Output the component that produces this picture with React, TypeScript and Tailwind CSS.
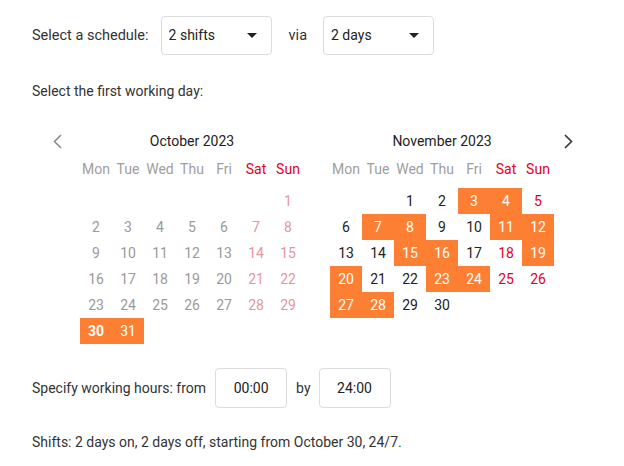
import clsx from "clsx";

const DAYS = ["Mon", "Tue", "Wed", "Thu", "Fri", "Sat", "Sun"];

// offset = empty cells before day 1 (Mon-first)
const OCT = { title: "October 2023", offset: 6, count: 31 };
const NOV = { title: "November 2023", offset: 2, count: 30 };

// shift pattern: 2 on, 2 off, starting Oct 30
function isOn(month: "oct" | "nov", day: number) {
  if (month === "oct") return day >= 30;
  const idx = day + 1; // Oct 30 = 0, Oct 31 = 1, Nov 1 = 2
  return idx % 4 < 2;
}

function Caret() {
  return (
    <svg width="10" height="5" viewBox="0 0 10 5" className="shrink-0">
      <path d="M0 0h10L5 5z" fill="#222" />
    </svg>
  );
}

function Select({ value }: { value: string }) {
  return (
    <div className="flex h-[39px] w-[111px] items-center justify-between rounded border border-[#dcdcdc] pl-[7px] pr-[14px] text-[14px] text-[#222]">
      <span>{value}</span>
      <Caret />
    </div>
  );
}

function Month({ title, offset, count, past, month }: { title: string; offset: number; count: number; past: boolean; month: "oct" | "nov" }) {
  const cells: (number | null)[] = [];
  for (let i = 0; i < offset; i++) cells.push(null);
  for (let d = 1; d <= count; d++) cells.push(d);

  return (
    <div className="w-[224px]">
      <div className="flex h-[24px] items-center justify-center text-[14px] text-[#222]">{title}</div>
      <div className="mt-[4px] grid h-[24px] grid-cols-7 items-center text-center text-[14px]">
        {DAYS.map((d, i) => (
          <span key={d} className={i >= 5 ? "text-[#e3001b]" : "text-[#9e9e9e]"}>{d}</span>
        ))}
      </div>
      <div className="mt-[7px] grid grid-cols-7 text-center text-[14px]">
        {cells.map((d, i) => {
          if (d === null) return <span key={i} className="h-[26px]" />;
          const weekend = i % 7 >= 5;
          const on = isOn(month, d);
          return (
            <span
              key={i}
              className={clsx(
                "flex h-[26px] items-center justify-center",
                on && "bg-[#fd7f34] text-white",
                on && month === "oct" && d === 30 && "font-bold",
                !on && past && (weekend ? "text-[#e8959e]" : "text-[#9a9a9a]"),
                !on && !past && (weekend ? "text-[#e3001b]" : "text-[#222]")
              )}
            >
              {d}
            </span>
          );
        })}
      </div>
    </div>
  );
}

function TimeBox({ value }: { value: string }) {
  return (
    <div className="flex h-[40px] w-[72px] items-center justify-center rounded border border-[#dcdcdc] text-[14px] text-[#222]">
      {value}
    </div>
  );
}

export default function App() {
  return (
    <div className="h-[466px] w-[624px] bg-white pl-[32px] pt-[16px] text-[14px] text-[#333]" style={{ fontFamily: "Roboto, 'Liberation Sans', sans-serif" }}>
      <div className="flex items-center">
        <span className="text-[14.5px]">Select a schedule:</span>
        <div className="ml-[12px]"><Select value="2 shifts" /></div>
        <span className="ml-[17px] text-[14.5px]">via</span>
        <div className="ml-[16px]"><Select value="2 days" /></div>
      </div>

      <div className="mt-[26px] h-[20px] leading-[20px]">Select the first working day:</div>

      <div className="mt-[28px] flex">
        <div className="flex h-[24px] w-[48px] items-center pl-[21px]">
          <svg width="9" height="15" viewBox="0 0 9 15">
            <path d="M8 1L1.5 7.5L8 14" fill="none" stroke="#8a8a8a" strokeWidth="1.6" />
          </svg>
        </div>
        <Month {...OCT} past month="oct" />
        <div className="w-[26px]" />
        <Month {...NOV} past={false} month="nov" />
        <div className="flex h-[24px] items-center pl-[10px]">
          <svg width="9" height="15" viewBox="0 0 9 15">
            <path d="M1 1L7.5 7.5L1 14" fill="none" stroke="#333" strokeWidth="1.6" />
          </svg>
        </div>
      </div>

      <div className="mt-[24px] flex items-center">
        <span>Specify working hours: from</span>
        <div className="ml-[9px]"><TimeBox value="00:00" /></div>
        <span className="ml-[9px]">by</span>
        <div className="ml-[8px]"><TimeBox value="24:00" /></div>
      </div>

      <div className="mt-[24px]">Shifts: 2 days on, 2 days off, starting from October 30, 24/7.</div>
    </div>
  );
}
